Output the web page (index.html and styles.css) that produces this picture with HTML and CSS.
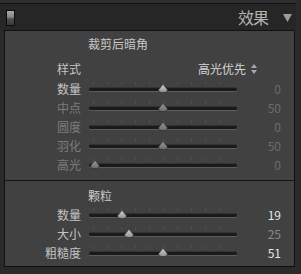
FILE: index.html
```html
<!DOCTYPE html>
<html lang="zh">
<head>
<meta charset="utf-8">
<link rel="stylesheet" href="styles.css">
</head>
<body>
<div class="topstrip"></div>
<header class="hdr">
  <span class="sw"></span>
  <span class="ttl">效果</span>
  <svg class="tri" width="9" height="8" viewBox="0 0 9 8"><path d="M0 0H9L4.5 8Z" fill="#9c9c9c"/></svg>
</header>
<div class="panel">
  <section class="sec s1">
    <div class="title">裁剪后暗角</div>
    <div class="row style">
      <span class="lab">样式</span>
      <span class="sel">高光优先<svg class="ud" width="6" height="10" viewBox="0 0 6 10"><path d="M3 0L6 4H0Z M0 6H6L3 10Z" fill="#a8a8a8"/></svg></span>
    </div>
    <div class="row"><span class="lab">数量</span><div class="track"><svg class="thumb" style="left:50%" width="10" height="9" viewBox="0 0 10 9"><path d="M5 .3L9.3 5.6Q9.8 8.6 5 8.6Q.2 8.6 .7 5.6Z"/></svg></div><span class="val dim">0</span></div>
    <div class="row off"><span class="lab">中点</span><div class="track"><svg class="thumb" style="left:50%" width="10" height="9" viewBox="0 0 10 9"><path d="M5 .3L9.3 5.6Q9.8 8.6 5 8.6Q.2 8.6 .7 5.6Z"/></svg></div><span class="val dim">50</span></div>
    <div class="row off"><span class="lab">圆度</span><div class="track"><svg class="thumb" style="left:50%" width="10" height="9" viewBox="0 0 10 9"><path d="M5 .3L9.3 5.6Q9.8 8.6 5 8.6Q.2 8.6 .7 5.6Z"/></svg></div><span class="val dim">0</span></div>
    <div class="row off"><span class="lab">羽化</span><div class="track"><svg class="thumb" style="left:50%" width="10" height="9" viewBox="0 0 10 9"><path d="M5 .3L9.3 5.6Q9.8 8.6 5 8.6Q.2 8.6 .7 5.6Z"/></svg></div><span class="val dim">50</span></div>
    <div class="row off"><span class="lab">高光</span><div class="track"><svg class="thumb" style="left:4%" width="10" height="9" viewBox="0 0 10 9"><path d="M5 .3L9.3 5.6Q9.8 8.6 5 8.6Q.2 8.6 .7 5.6Z"/></svg></div><span class="val dim">0</span></div>
  </section>
  <section class="sec s2">
    <div class="title">颗粒</div>
    <div class="row"><span class="lab">数量</span><div class="track"><svg class="thumb" style="left:22%" width="10" height="9" viewBox="0 0 10 9"><path d="M5 .3L9.3 5.6Q9.8 8.6 5 8.6Q.2 8.6 .7 5.6Z"/></svg></div><span class="val hi">19</span></div>
    <div class="row"><span class="lab">大小</span><div class="track"><svg class="thumb" style="left:27%" width="10" height="9" viewBox="0 0 10 9"><path d="M5 .3L9.3 5.6Q9.8 8.6 5 8.6Q.2 8.6 .7 5.6Z"/></svg></div><span class="val mid">25</span></div>
    <div class="row"><span class="lab">粗糙度</span><div class="track"><svg class="thumb" style="left:50%" width="10" height="9" viewBox="0 0 10 9"><path d="M5 .3L9.3 5.6Q9.8 8.6 5 8.6Q.2 8.6 .7 5.6Z"/></svg></div><span class="val hi">51</span></div>
  </section>
</div>
<svg width="0" height="0" style="position:absolute">
  <defs>
    <linearGradient id="tg" x1="0" y1="0" x2="0" y2="1">
      <stop offset="0" stop-color="#d6d6d6"/>
      <stop offset="1" stop-color="#8c8c8c"/>
    </linearGradient>
    <linearGradient id="tgd" x1="0" y1="0" x2="0" y2="1">
      <stop offset="0" stop-color="#9a9a9a"/>
      <stop offset="1" stop-color="#6a6a6a"/>
    </linearGradient>
  </defs>
</svg>
</body>
</html>
```

FILE: styles.css
```css
html, body {
  margin: 0;
  padding: 0;
}
body {
  width: 301px;
  height: 274px;
  overflow: hidden;
  background: #2a2a2a;
  font-family: "Noto Sans CJK SC", "Noto Sans", sans-serif;
  font-size: 12px;
  color: #c4c4c4;
}
.topstrip {
  height: 3px;
  background: #2f2f2f;
  border-bottom: 1px solid #141414;
  width: 296px;
}
.hdr {
  width: 296px;
  box-sizing: border-box;
  height: 26px;
  background: #262626;
  display: flex;
  align-items: center;
  padding-left: 6px;
  padding-right: 4px;
}
.sw {
  width: 7px;
  height: 14px;
  border: 1px solid #0c0c0c;
  background: linear-gradient(#a8a8a8 0, #8a8a8a 40%, #4a4a4a 60%, #3a3a3a 100%);
  margin-top: 2px;
}
.ttl {
  margin-left: auto;
  font-size: 16px;
  line-height: 20px;
  color: #b4b4b4;
  letter-spacing: -1px;
}
.tri {
  margin-left: 15px;
  margin-top: 1px;
}
.panel {
  margin-left: 4px;
  width: 289px;
  border: 1px solid #111;
  border-bottom-color: #0e0e0e;
  background: #414141;
}
.sec {
  display: flex;
  flex-direction: column;
}
.s1 {
  padding-top: 4px;
  padding-bottom: 6px;
  border-bottom: 1px solid #141414;
}
.s2 {
  padding-top: 6px;
  padding-bottom: 4px;
}
.title {
  height: 18px;
  line-height: 18px;
  padding-left: 83px;
  color: #c8c8c8;
}
.row {
  height: 19px;
  display: grid;
  grid-template-columns: 76px 148px 1fr;
  column-gap: 8px;
  align-items: center;
}
.row.style {
  height: 21px;
  margin-top: 5px;
}
.lab {
  text-align: right;
  line-height: 19px;
  color: #c4c4c4;
  white-space: nowrap;
}
.off .lab {
  color: #7c7c7c;
}
.sel {
  grid-column: 2 / 4;
  justify-self: end;
  margin-right: 37px;
  display: flex;
  align-items: center;
  color: #d4d4d4;
}
.ud {
  margin-left: 5px;
}
.track {
  position: relative;
  height: 3px;
  margin-top: 2px;
  border-radius: 2px;
  background: #1a1a1a;
  box-shadow: 0 1px 0 #5c5c5c, 0 -1px 0 #333;
}
.track::before {
  content: "";
  position: absolute;
  left: 4px;
  right: 4px;
  top: -6px;
  height: 3px;
  background: repeating-linear-gradient(90deg, #4e4e4e 0 1px, transparent 1px 14px);
}
.thumb {
  position: absolute;
  top: -4px;
  margin-left: -5px;
}
.thumb path {
  fill: url(#tg);
  stroke: #2a2a2a;
  stroke-width: .6;
}
.off .thumb path {
  fill: url(#tgd);
}
.val {
  text-align: right;
  padding-right: 13px;
  line-height: 19px;
}
.val.dim {
  color: #6c6c6c;
}
.val.mid {
  color: #8a8a8a;
}
.val.hi {
  color: #e6e6e6;
}
```
